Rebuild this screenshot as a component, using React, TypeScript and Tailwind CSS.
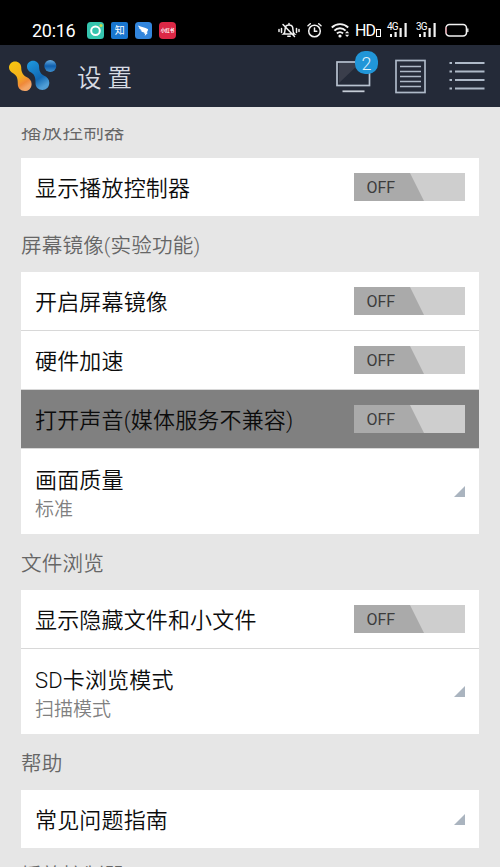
import type { ReactNode } from "react";

function Logo() {
  return (
    <svg width="50" height="36" viewBox="0 0 50 36" className="block">
      <defs>
        <linearGradient id="gold" x1="0" y1="0" x2="0.5" y2="1">
          <stop offset="0" stopColor="#f9c80e" />
          <stop offset="0.6" stopColor="#f3b01c" />
          <stop offset="0.85" stopColor="#f0893a" />
          <stop offset="1" stopColor="#f3a566" />
        </linearGradient>
        <linearGradient id="blue" x1="0" y1="0" x2="0.5" y2="1">
          <stop offset="0" stopColor="#1f9be0" />
          <stop offset="0.7" stopColor="#1169b4" />
          <stop offset="1" stopColor="#4f9dd6" />
        </linearGradient>
        <linearGradient id="ball" x1="0" y1="0" x2="0" y2="1">
          <stop offset="0" stopColor="#6aaee0" />
          <stop offset="0.5" stopColor="#0f5fae" />
          <stop offset="1" stopColor="#3f8fce" />
        </linearGradient>
      </defs>
      <path fill="url(#gold)" d="M6 2.500c3.600 0 6.200 2.600 6.200 5.800 0 4.200 1.300 7.600 4.800 9.400 3.500 1.600 5.600 3.700 5.600 7.200 0 4.200-3 7.200-6.900 7.200-4 0-7-3-6.900-7 .1-5-.6-8.400-4.300-10.700C1.500 13 0 11.200 0 8.600 0 5.100 2.700 2.500 6 2.500z" />
      <path fill="url(#blue)" d="M24 1.800c3.600 0 6.100 2.600 6.100 5.800 0 4 1.200 7.200 4.700 9 3.400 1.700 5.500 3.700 5.500 7.200 0 4.200-3 7.200-6.900 7.200-4 0-7-3-6.900-7 .1-4.900-.7-8.200-4.300-10.400-2.800-1.500-4.200-3.300-4.200-5.900 0-3.400 2.700-5.900 6-5.900z" />
      <circle cx="41.300" cy="7" r="6" fill="url(#ball)" />
    </svg>
  );
}

function AppBadges() {
  return (
    <div className="ml-3 flex gap-[7px]">
      <svg width="17" height="17" viewBox="0 0 17 17">
        <rect width="17" height="17" rx="3.500" fill="#35c4ae" />
        <circle cx="8.500" cy="8.800" r="4.300" fill="none" stroke="#fff" strokeWidth="2" />
        <circle cx="14" cy="3.500" r="1.600" fill="#c8d84a" />
      </svg>
      <div className="flex h-[17px] w-[17px] items-center justify-center rounded-[2px] bg-[#1976cf] text-[10px] leading-none text-white">知</div>
      <svg width="17" height="17" viewBox="0 0 17 17">
        <rect width="17" height="17" rx="3.500" fill="#3285dc" />
        <path fill="#fff" d="M3 3.500c3.500 1.300 7 2 9.700 3.600.6.400.4 1-.1 2l-1 1.600h1.400L9.700 14l.6-2.500H8.700l.7-1.100C7.500 10.200 6 9.300 5.500 8.200l1.700.2C5.300 7.600 4 6.500 3.800 5.500c.1-.2 1.200.2 1.200.2C3.800 5 3.200 4.300 3 3.500z" />
      </svg>
      <div className="flex h-[17px] w-[17px] items-center justify-center overflow-hidden rounded-[4px] bg-[#dc2846]">
        <span className="shrink-0 scale-[0.5] whitespace-nowrap text-[9px] font-bold leading-none text-white">小红书</span>
      </div>
    </div>
  );
}

function Bars() {
  return (
    <svg width="20" height="17" viewBox="0 0 20 17" fill="#f2f2f2">
      <rect x="3" y="12" width="2" height="3" />
      <rect x="7.500" y="10" width="2.200" height="5" />
      <rect x="12.500" y="6" width="2.200" height="9" />
      <rect x="17.500" y="1" width="2.200" height="14" />
    </svg>
  );
}

function Signal({ label }: { label: string }) {
  return (
    <div className="relative h-[17px] w-5">
      <Bars />
      <span className="absolute left-0 top-0 text-[10px] leading-[9px] tracking-[-0.800px] text-white">{label}</span>
    </div>
  );
}

function StatusIcons() {
  return (
    <div className="ml-auto flex items-center">
      <svg width="22" height="17" viewBox="0 0 22 17" fill="none" stroke="#f2f2f2" strokeWidth="1.500" strokeLinecap="round">
        <path d="M5.500 12c1.500-1.200 1.600-2.500 1.600-4.800 0-2.500 1.600-4.200 3.900-4.200s3.900 1.700 3.900 4.200c0 2.300.1 3.600 1.600 4.800zM11 1.500v1.500M9.800 14.300h2.400M5 2.500l11.500 12M3.500 6.500v4M1 7.500v2M18.500 6.500v4M21 7.500v2" />
      </svg>
      <svg width="15" height="17" viewBox="0 0 15 17" fill="none" stroke="#f2f2f2" strokeWidth="1.500" strokeLinecap="round" className="ml-[7px]">
        <circle cx="7.500" cy="9" r="5.800" />
        <path d="M7.500 6v3.300h2.300M1 3.800l2.300-2M14 3.800l-2.300-2" />
      </svg>
      <svg width="19" height="17" viewBox="0 0 19 17" fill="none" stroke="#f2f2f2" strokeWidth="1.900" className="ml-[9px]">
        <path d="M.8 5.500c4.600-4.500 11.800-4.500 16.400 0M3.400 8.600c3.100-3.200 8.100-3.200 11.200 0M6 11.500c1.700-1.800 4.300-1.800 6 0" />
        <circle cx="9" cy="14" r="1.600" fill="#f2f2f2" stroke="none" />
        <path d="M14 11.300l2.100-2.300 2.100 2.300zM14 12.700l2.100 2.300 2.100-2.300z" fill="#f2f2f2" stroke="none" />
      </svg>
      <div className="ml-[5px] flex w-[24px] items-center">
        <span className="text-[16px] leading-[17px] tracking-[-1px] text-white">HD</span>
        <span className="ml-[1px] mt-[4px] h-[8px] w-[5px] shrink-0 border-[1.500px] border-white" />
      </div>
      <div className="ml-[8px]"><Signal label="4G" /></div>
      <div className="ml-[9px]"><Signal label="3G" /></div>
      <svg width="24" height="15" viewBox="0 0 24 15" fill="none" className="ml-[9px]">
        <rect x="1" y="1.500" width="20.500" height="11.500" rx="3.500" stroke="#f2f2f2" strokeWidth="1.600" />
        <path d="M1.200 4v6.500" stroke="#c46a78" strokeWidth="1" />
        <path d="M22.800 5.500v3.500" stroke="#f2f2f2" strokeWidth="1.300" />
      </svg>
    </div>
  );
}

function HeaderIcons() {
  return (
    <div className="ml-auto flex items-start">
      <div className="relative">
        <svg width="35" height="33" viewBox="0 0 35 33" className="block">
          <path d="M3 2h21L3 22z" fill="#3a3e4b" />
          <rect x="1" y="1" width="32.500" height="23.500" fill="none" stroke="#b8c2d0" strokeWidth="1.700" />
          <path d="M6.500 30.300h22" stroke="#c5ccd6" strokeWidth="1.800" />
        </svg>
        <span className="absolute -top-[10px] left-[19px] flex h-[23px] w-[23px] items-center justify-center rounded-[10px] bg-[#2196d8] pt-[3px] text-[18px] font-light leading-none text-[#e2f2fa]">2</span>
      </div>
      <svg width="31" height="35" viewBox="0 0 31 35" fill="none" stroke="#aeb9c8" className="-mt-[2px] ml-[24px]">
        <rect x="1" y="1.500" width="29" height="32" strokeWidth="1.700" />
        <path d="M5 7.500h21M5 12.500h21M5 17.500h21M5 22.500h21M5 27.500h21" strokeWidth="1.700" />
      </svg>
      <svg width="36" height="32" viewBox="0 0 36 32" fill="none" stroke="#aeb9c8" strokeWidth="2.200" className="ml-[23px]">
        <path d="M6 2h29.500M6 10.500h29.500M6 19h29.500M6 27.500h29.500M.5 2h2.500M.5 10.500h2.500M.5 19h2.500M.5 27.500h2.500" />
      </svg>
    </div>
  );
}

function Toggle() {
  return (
    <div className="relative h-7 w-[111px] bg-[#cecece]">
      <div className="absolute inset-y-0 left-0 w-[70px] bg-[#aaaaaa] [clip-path:polygon(0_0,56px_0,70px_100%,0_100%)]" />
      <span className="absolute left-[12.500px] top-[1px] text-[16px] leading-[28px] text-[#3c3c3c]">OFF</span>
    </div>
  );
}

function SwitchRow({ title, pressed }: { title: string; pressed?: boolean }) {
  return (
    <div className={`flex h-[58px] items-center justify-between pl-[14px] pr-[14px] ${pressed ? "bg-[#808080]" : "bg-white"}`}>
      <span className="pt-[4px] text-[22px] font-[350] leading-[30px] tracking-[0.160px] text-[#0c0c0c]">{title}</span>
      <Toggle />
    </div>
  );
}

function LinkRow({ title, value }: { title: string; value?: string }) {
  return (
    <div className={`flex items-center justify-between bg-white pl-[14px] pr-[14px] ${value ? "h-[85px]" : "h-[58px]"}`}>
      <div className={value ? "pt-[6px]" : "pt-[4px]"}>
        <div className="text-[22px] font-[350] leading-[30px] tracking-[0.160px] text-[#0c0c0c]">{title}</div>
        {value && <div className="text-[19px] font-[350] leading-[27px] text-[#808080]">{value}</div>}
      </div>
      <svg width="11" height="11" viewBox="0 0 11 11">
        <path d="M11 0v11H0z" fill="#aab4bf" />
      </svg>
    </div>
  );
}

function Section({ title, children }: { title: string; children?: ReactNode }) {
  return (
    <section>
      <h2 className="flex h-14 items-center pt-[4px] text-[20.600px] font-[350] leading-[28px] tracking-[0.120px] text-[#666]">{title}</h2>
      <div className="flex flex-col gap-px bg-[#d8d8d8]">{children}</div>
    </section>
  );
}

export default function App() {
  return (
    <div className="flex h-[867px] w-[500px] flex-col overflow-hidden bg-[#e6e6e6] font-['Roboto','Noto_Sans_CJK_SC',sans-serif]">
      {/* status bar */}
      <div className="flex h-[45px] shrink-0 items-center bg-black pl-8 pr-[31px] pt-[16px]">
        <span className="text-[18px] leading-[18px] tracking-[-0.300px] text-white">20:16</span>
        <AppBadges />
        <StatusIcons />
      </div>

      <header className="flex h-[62px] shrink-0 items-start bg-[#242a38] pl-[9px] pr-[15px]">
        <div className="pt-[14px]"><Logo /></div>
        <h1 className="ml-[18px] pt-[17px] text-[24.500px] font-[350] leading-[34px] tracking-[6px] text-[#d8dce4]">设置</h1>
        <div className="ml-auto pt-[16px]"><HeaderIcons /></div>
      </header>

      {/* settings list, scrolled a bit */}
      <div className="mx-[21px] mt-[21px] flex-1 overflow-hidden">
        <div className="-mt-[26px]">
          <Section title="播放控制器">
            <SwitchRow title="显示播放控制器" />
          </Section>
          <Section title="屏幕镜像(实验功能)">
            <SwitchRow title="开启屏幕镜像" />
            <SwitchRow title="硬件加速" />
            <SwitchRow title="打开声音(媒体服务不兼容)" pressed />
            <LinkRow title="画面质量" value="标准" />
          </Section>
          <Section title="文件浏览">
            <SwitchRow title="显示隐藏文件和小文件" />
            <LinkRow title="SD卡浏览模式" value="扫描模式" />
          </Section>
          <Section title="帮助">
            <LinkRow title="常见问题指南" />
          </Section>
          <div className="-mt-[2px]">
            <Section title="播放控制器" />
          </div>
        </div>
      </div>
    </div>
  );
}
